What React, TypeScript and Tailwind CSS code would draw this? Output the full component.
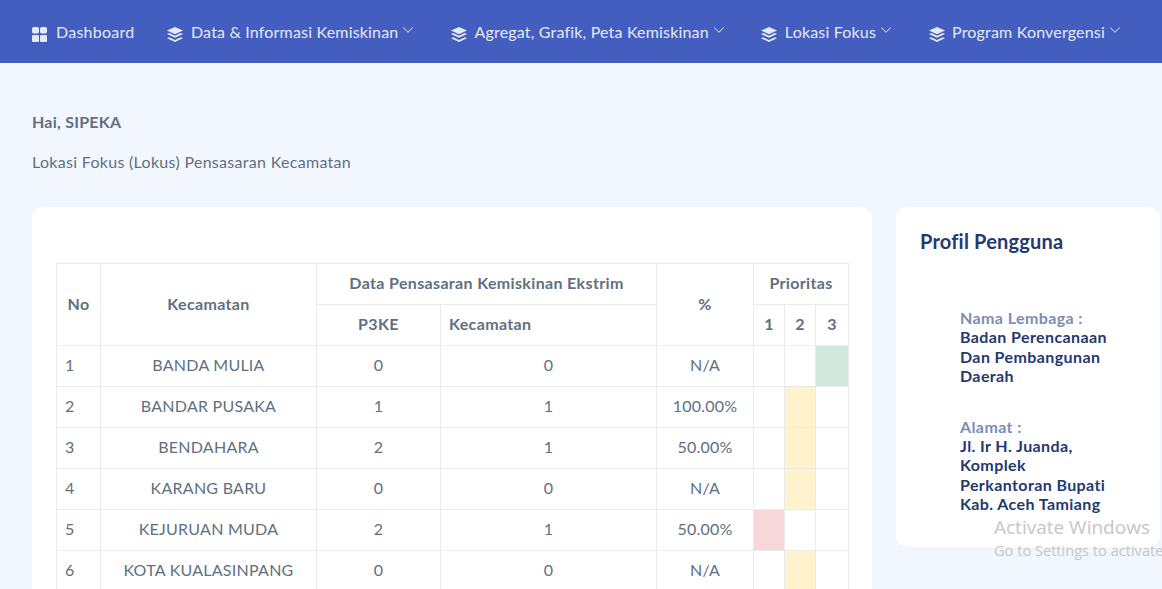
import { BsChevronDown } from "react-icons/bs";

const menu = [
  { label: "Data & Informasi Kemiskinan" },
  { label: "Agregat, Grafik, Peta Kemiskinan" },
  { label: "Lokasi Fokus" },
  { label: "Program Konvergensi" },
];

const rows = [
  { no: 1, name: "BANDA MULIA", p3ke: 0, kec: 0, pct: "N/A", level: 3 },
  { no: 2, name: "BANDAR PUSAKA", p3ke: 1, kec: 1, pct: "100.00%", level: 2 },
  { no: 3, name: "BENDAHARA", p3ke: 2, kec: 1, pct: "50.00%", level: 2 },
  { no: 4, name: "KARANG BARU", p3ke: 0, kec: 0, pct: "N/A", level: 2 },
  { no: 5, name: "KEJURUAN MUDA", p3ke: 2, kec: 1, pct: "50.00%", level: 1 },
  { no: 6, name: "KOTA KUALASINPANG", p3ke: 0, kec: 0, pct: "N/A", level: 2 },
];

const th = "border border-[#e9ebee] pb-[2px] font-bold tracking-[0.35px] text-[#607080] text-[16px]";
const td = "h-[41px] border border-[#e9ebee] pb-[2px] text-center";

function GridIcon() {
  return (
    <svg viewBox="0 0 15 15" className="mt-[5px] h-[15px] w-[15px] shrink-0 fill-current">
      <rect x="0" y="0" width="7" height="6.5" rx="1.8" />
      <rect x="8" y="0" width="7" height="6.5" rx="1.8" />
      <rect x="0" y="8" width="7" height="7" rx="1.2" />
      <rect x="8" y="8" width="7" height="7" rx="1.2" />
    </svg>
  );
}

function StackIcon() {
  return (
    <svg viewBox="0 0 18 16" className="mt-[6px] mr-[6.5px] h-4 w-[18px] shrink-0 fill-current">
      <path d="M9 0 17 3.6 9 7.2 1 3.6Z" />
      <path d="M1 7 3.2 6 9 8.7 14.8 6 17 7 9 10.7Z" />
      <path d="M1 11.3 3.2 10.3 9 13 14.8 10.3 17 11.3 9 15Z" />
    </svg>
  );
}

export default function App() {
  return (
    <div className="relative h-[589px] overflow-hidden bg-[#f2f7ff] font-['Lato',sans-serif] text-[16px] text-[#607080]">
      <nav className="flex h-[63px] items-center whitespace-nowrap bg-[#435ebe] pl-8 tracking-[0.18px] text-[#e3e9f6]">
        <a className="mr-8 flex shrink-0 items-center gap-[9px]">
          <GridIcon />
          <span className="tracking-[0.25px]">Dashboard</span>
        </a>
        {menu.map((m) => (
          <a key={m.label} className="mr-[35.5px] flex shrink-0 items-center">
            <StackIcon />
            <span>{m.label}</span>
            <BsChevronDown className="mb-1 ml-1 h-3 w-3" />
          </a>
        ))}
      </nav>

      <main className="px-8 pt-[48px]">
        <h3 className="text-[16px] leading-[22px] font-bold tracking-[0.25px]">Hai, SIPEKA</h3>
        <p className="mt-[18px] text-[16px] leading-[22px] tracking-[0.3px]">Lokasi Fokus (Lokus) Pensasaran Kecamatan</p>

        <div className="mt-[34px] flex items-start gap-6">
          <section className="w-[840px] shrink-0 rounded-xl bg-white px-6 pt-14 pb-6">
            <table className="w-[792px] table-fixed border-collapse text-[16px] tracking-[0.25px]">
              <colgroup>
                <col className="w-[44px]" />
                <col className="w-[216px]" />
                <col className="w-[124px]" />
                <col className="w-[216px]" />
                <col className="w-[97px]" />
                <col className="w-[31px]" />
                <col className="w-[31px]" />
                <col className="w-[33px]" />
              </colgroup>
              <thead>
                <tr className="h-[41px]">
                  <th rowSpan={2} className={th}>No</th>
                  <th rowSpan={2} className={th}>Kecamatan</th>
                  <th colSpan={2} className={th}>Data Pensasaran Kemiskinan Ekstrim</th>
                  <th rowSpan={2} className={th}>%</th>
                  <th colSpan={3} className={th}>Prioritas</th>
                </tr>
                <tr className="h-[41px]">
                  <th className={th}>P3KE</th>
                  <th className={`${th} pl-2 text-left`}>Kecamatan</th>
                  <th className={th}>1</th>
                  <th className={th}>2</th>
                  <th className={th}>3</th>
                </tr>
              </thead>
              <tbody>
                {rows.map((r) => (
                  <tr key={r.no}>
                    <td className={`${td} pl-2 text-left`}>{r.no}</td>
                    <td className={td}>{r.name}</td>
                    <td className={td}>{r.p3ke}</td>
                    <td className={td}>{r.kec}</td>
                    <td className={td}>{r.pct}</td>
                    <td className={`${td} ${r.level === 1 ? "bg-[#f8d7da]" : ""}`}></td>
                    <td className={`${td} ${r.level === 2 ? "bg-[#fff3cd]" : ""}`}></td>
                    <td className={`${td} ${r.level === 3 ? "bg-[#d1e7dd]" : ""}`}></td>
                  </tr>
                ))}
              </tbody>
            </table>
          </section>

          <aside className="h-[340px] w-[264px] shrink-0 rounded-xl bg-white px-6 pt-[22px]">
            <h4 className="text-[20px] leading-[24px] font-bold tracking-[0.2px] text-[#25396f]">Profil Pengguna</h4>
            <div className="mt-[55px] ml-10 text-[16px] leading-[19.4px] font-bold tracking-[0.4px]">
              <div className="text-[#7c8db5]">Nama Lembaga :</div>
              <div className="text-[#25396f]">Badan Perencanaan<br />Dan Pembangunan<br />Daerah</div>
              <div className="mt-[31px] text-[#7c8db5]">Alamat :</div>
              <div className="text-[#25396f]">Jl. Ir H. Juanda,<br />Komplek<br />Perkantoran Bupati<br />Kab. Aceh Tamiang</div>
            </div>
          </aside>
        </div>
      </main>

      <div className="pointer-events-none absolute top-[515px] left-[994px] font-['Open_Sans',sans-serif] whitespace-nowrap text-[#c4c6c8]">
        <div className="text-[19px] leading-[24px]">Activate Windows</div>
        <div className="mt-[2px] text-[14.6px] leading-[19px]">Go to Settings to activate</div>
      </div>
    </div>
  );
}
